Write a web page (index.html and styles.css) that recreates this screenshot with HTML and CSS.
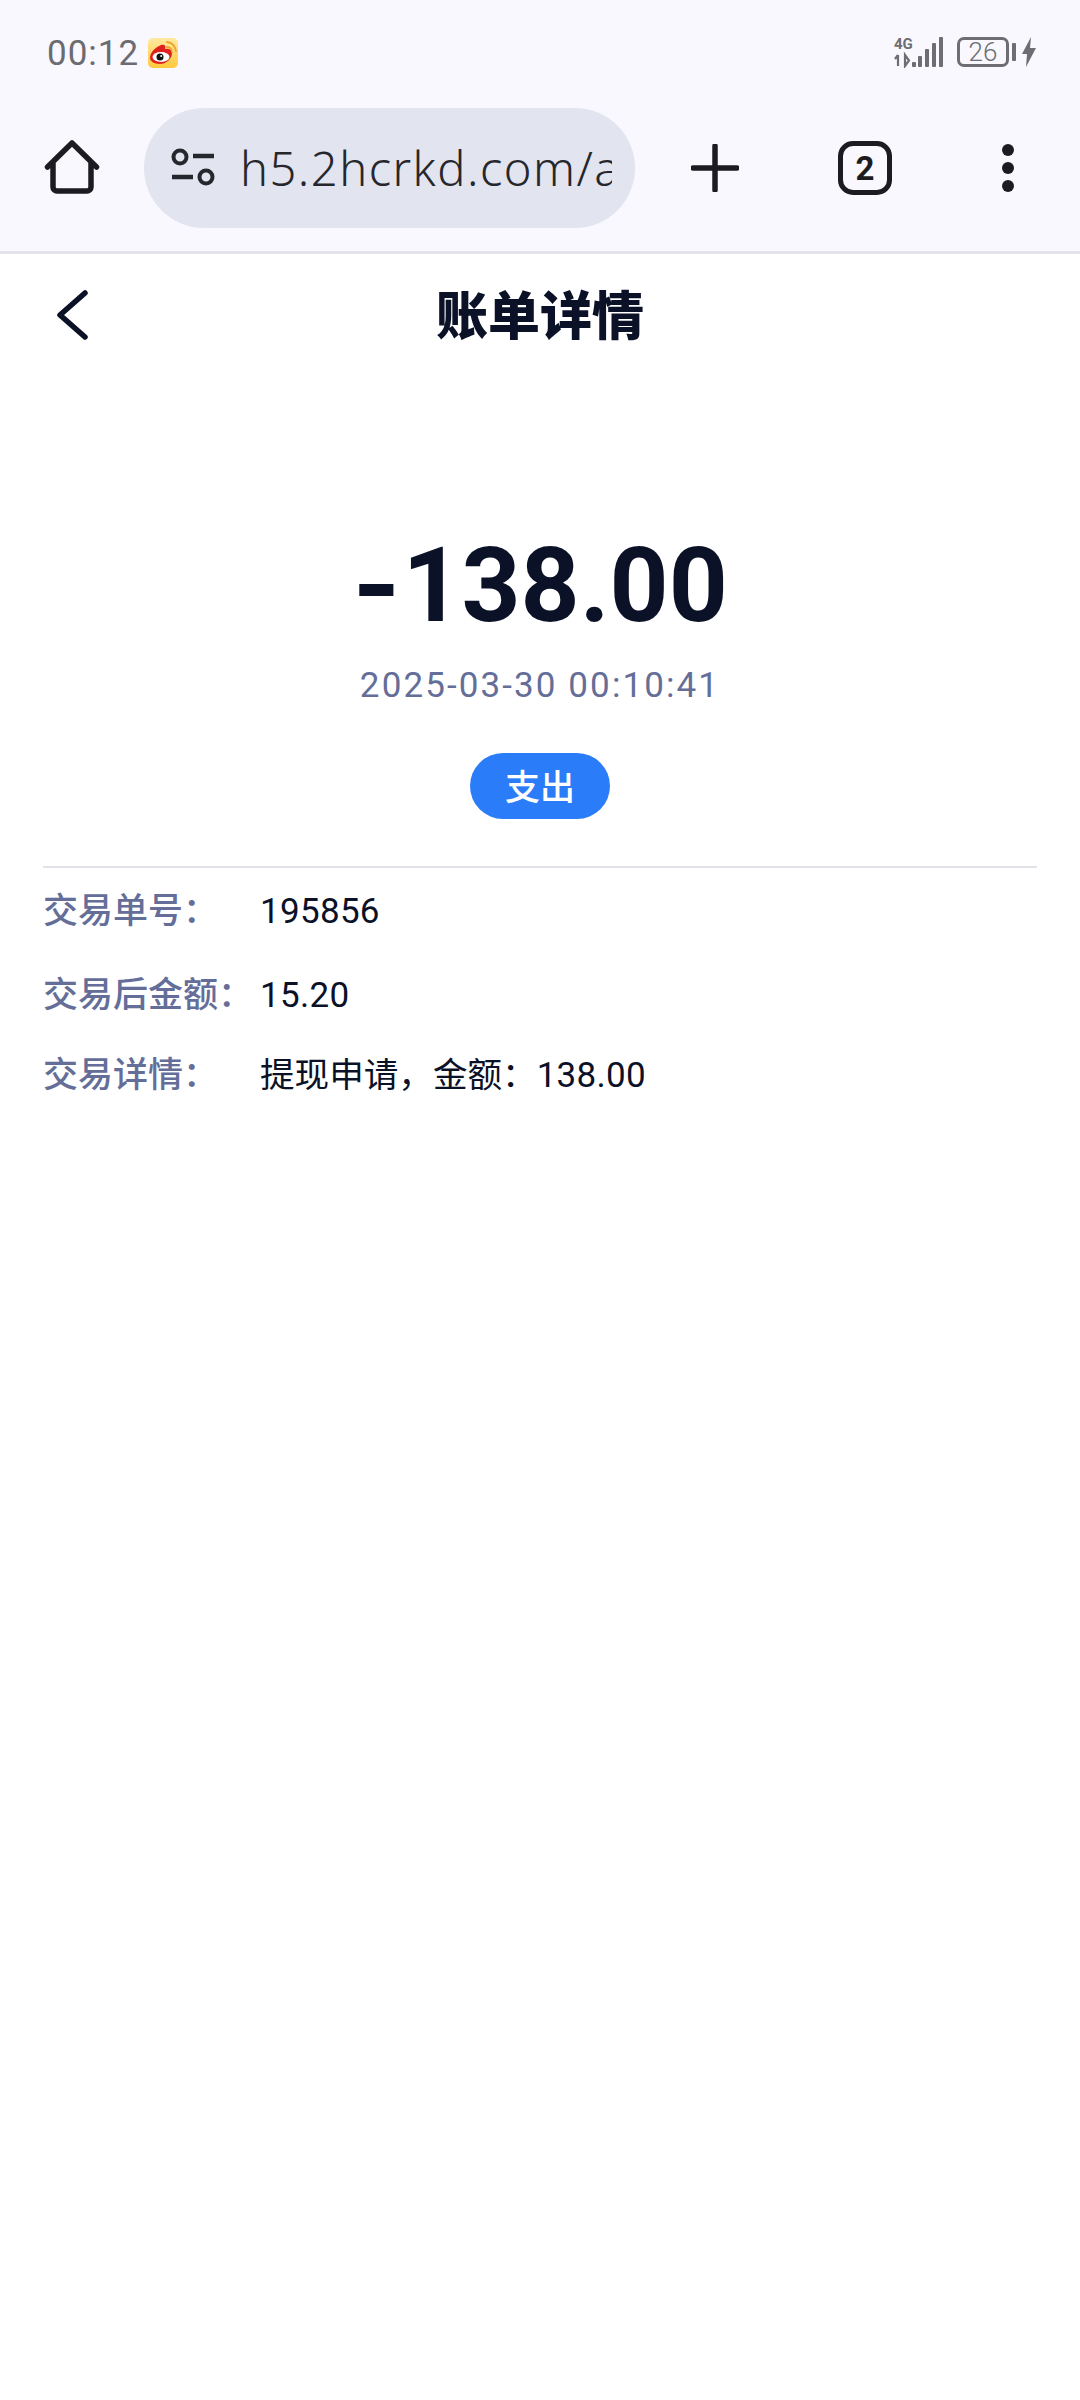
FILE: index.html
```html
<!DOCTYPE html>
<html lang="zh-CN">
<head>
    <meta charset="UTF-8">
    <meta name="viewport" content="width=device-width, initial-scale=1.0">
    <title>账单详情</title>
    <link rel="stylesheet" href="styles.css">
</head>
<body>
  <div class="browser-top">
    <div class="status-bar">
        <div class="status-left">
            <span class="clock">00:12</span>
            <svg class="app-icon" viewBox="0 0 30 30" width="30" height="30">
                <defs>
                    <linearGradient id="appbg" x1="0" y1="0" x2="0" y2="1">
                        <stop offset="0" stop-color="#ffe9a0"/>
                        <stop offset="1" stop-color="#ffc93c"/>
                    </linearGradient>
                </defs>
                <rect width="30" height="30" rx="5" fill="url(#appbg)"/>
                <path d="M2 20c0-6 6-11 11-13 4-1 5 1 4 4 4-1 7 1 7 4 0 6-6 11-12 11-6 0-10-3-10-6z" fill="#e0201c"/>
                <ellipse cx="13" cy="19" rx="8.500" ry="5" fill="#fff"/>
                <circle cx="12" cy="19" r="3.500" fill="#111"/>
                <circle cx="13.200" cy="18" r="1" fill="#fff"/>
                <path d="M19 9a5 5 0 0 1 5 5M19 4a10 10 0 0 1 9 9" fill="none" stroke="#eda02c" stroke-width="1.800" stroke-linecap="round"/>
            </svg>
        </div>
        <div class="status-right">
            <svg class="signal" viewBox="0 0 50 32" width="50" height="32">
                <text x="0" y="13" class="net-text">4G</text>
                <path d="M4 19v11M1 23l3-4M11 19v11l4-5.500z" fill="none" stroke="#6d6d72" stroke-width="2.200"/>
                <rect x="18" y="26" width="4" height="5" rx="1" fill="#6d6d72"/>
                <rect x="24" y="20" width="4" height="11" rx="1" fill="#6d6d72"/>
                <rect x="31" y="13" width="4" height="18" rx="1" fill="#6d6d72"/>
                <rect x="38" y="7" width="4" height="24" rx="1" fill="#6d6d72"/>
                <rect x="45" y="1" width="4" height="30" rx="1" fill="#6d6d72"/>
            </svg>
            <div class="battery"><span>26</span></div>
            <div class="battery-cap"></div>
            <svg viewBox="0 0 14 30" width="14" height="30">
                <path d="M9 0 0 17h5l-1 13 10-19H8z" fill="#6d6d72"/>
            </svg>
        </div>
    </div>
    <div class="toolbar">
        <svg class="home-icon" viewBox="0 0 56 56" width="56" height="56">
            <path d="M3.500 27 28 3l24.500 24M9 22v25a4 4 0 0 0 4 4h30a4 4 0 0 0 4-4V22" fill="none" stroke="#1b1b20" stroke-width="5.500" stroke-linecap="round" stroke-linejoin="round"/>
        </svg>
        <div class="url-pill">
            <svg class="tune-icon" viewBox="0 0 44 40" width="44" height="40">
                <circle cx="9" cy="9" r="6.500" fill="none" stroke="#26272c" stroke-width="4"/>
                <path d="M22 8h21M1 29h21" stroke="#26272c" stroke-width="4.500" fill="none"/>
                <circle cx="35" cy="29" r="6.500" fill="none" stroke="#26272c" stroke-width="4"/>
            </svg>
            <div class="url-text">h5.2hcrkd.com/a</div>
        </div>
        <svg class="plus-icon" viewBox="0 0 48 48" width="48" height="48">
            <path d="M24 2v44M2 24h44" stroke="#1b1b20" stroke-width="5.500" stroke-linecap="round"/>
        </svg>
        <div class="tab-count">2</div>
        <div class="more-dots"><i></i><i></i><i></i></div>
    </div>
  </div>

  <div class="page">
    <div class="nav-bar">
        <svg class="back-icon" viewBox="0 0 33 50" width="33" height="50">
            <path d="M29 3 4 25l25 22" fill="none" stroke="#0b1126" stroke-width="5.500" stroke-linecap="round" stroke-linejoin="round"/>
        </svg>
        <h1>账单详情</h1>
    </div>
    <div class="summary">
        <div class="amount"><span class="minus">-</span>138.00</div>
        <div class="time">2025-03-30 00:10:41</div>
        <div class="tag">支出</div>
    </div>
    <div class="details">
        <div class="row row-no"><span class="label">交易单号：</span><span class="value num">195856</span></div>
        <div class="row row-balance"><span class="label">交易后金额：</span><span class="value num">15.20</span></div>
        <div class="row"><span class="label">交易详情：</span><span class="value">提现申请，金额：<span class="num">138.00</span></span></div>
    </div>
  </div>
</body>
</html>
```

FILE: styles.css
```css
*{
    margin: 0;
    padding: 0;
    box-sizing: border-box;
}
body{
    background: white;
    width: 1080px;
    min-height: 2400px;
    font-family: "Inter", "Roboto", "Noto Sans CJK SC", sans-serif;
}
.browser-top{
    background: #f8f8fe;
    height: 254px;
    border-bottom: 3px solid #e2e3e9;
}
.status-bar{
    height: 108px;
    padding: 28px 44px 0 47px;
    display: flex;
    justify-content: space-between;
    align-items: flex-start;
}
.status-left{
    display: flex;
    align-items: center;
    gap: 9px;
    height: 50px;
}
.clock{
    font-family: "Roboto", sans-serif;
    font-size: 35px;
    color: #6b6b70;
    letter-spacing: 1px;
}
.status-right{
    display: flex;
    align-items: center;
    height: 50px;
    margin-top: -1px;
}
.net-text{
    font-family: "Roboto", sans-serif;
    font-size: 15px;
    font-weight: 700;
    fill: #6d6d72;
}
.battery{
    width: 52px;
    height: 30px;
    margin-left: 13px;
    border: 3px solid #6d6d72;
    border-radius: 7px;
    display: flex;
    align-items: center;
    justify-content: center;
    font-family: "Roboto", sans-serif;
    font-size: 26px;
    font-weight: 300;
    color: #6d6d72;
}
.battery-cap{
    width: 4px;
    height: 18px;
    margin: 0 6px 0 3px;
    background: #6d6d72;
    border-radius: 1px;
}
.toolbar{
    display: flex;
    align-items: center;
    height: 120px;
}
.home-icon{
    margin-left: 44px;
}
.url-pill{
    width: 491px;
    height: 120px;
    margin-left: 44px;
    padding: 0 23px 0 27px;
    border-radius: 60px;
    background: #e2e4f0;
    display: flex;
    align-items: center;
}
.tune-icon{
    flex: none;
}
.url-text{
    margin-left: 25px;
    width: 372px;
    overflow: hidden;
    white-space: nowrap;
    font-family: "Noto Sans", sans-serif;
    font-size: 47px;
    font-weight: 300;
    letter-spacing: 1.500px;
    color: #26272c;
}
.plus-icon{
    margin-left: 56px;
}
.tab-count{
    width: 54px;
    height: 54px;
    margin-left: 99px;
    border: 5px solid #1b1b20;
    border-radius: 15px;
    display: flex;
    align-items: center;
    justify-content: center;
    font-family: "Roboto", sans-serif;
    font-size: 33px;
    font-weight: 700;
    color: #1b1b20;
}
.more-dots{
    margin-left: 110px;
    display: flex;
    flex-direction: column;
    gap: 6px;
}
.more-dots i{
    display: block;
    width: 12px;
    height: 12px;
    border-radius: 50%;
    background: #1b1b20;
}
.page{
    padding: 0 43px;
}
.nav-bar{
    position: relative;
    height: 84px;
    margin-top: 16px;
    display: flex;
    align-items: center;
    justify-content: center;
}
.back-icon{
    position: absolute;
    left: 13px;
    top: 20px;
}
.nav-bar h1{
    font-family: "Noto Sans CJK SC", sans-serif;
    font-size: 52px;
    font-weight: 900;
    color: #0b1126;
}
.summary{
    display: flex;
    flex-direction: column;
    align-items: center;
    border-bottom: 2px solid #e2e3e9;
    height: 514px;
    padding-top: 171px;
}
.amount{
    font-family: "Roboto", sans-serif;
    font-size: 103px;
    line-height: 122px;
    font-weight: 700;
    color: #0b1126;
}
.minus{
    font-family: "Inter", sans-serif;
    line-height: 1;
    margin-right: 2px;
}
.time{
    margin-top: 18px;
    font-family: "Roboto", sans-serif;
    font-size: 35px;
    line-height: 42px;
    color: #646e98;
    letter-spacing: 2.100px;
}
.tag{
    margin-top: 46px;
    width: 140px;
    height: 66px;
    border-radius: 33px;
    background: #2a7cf8;
    color: white;
    font-family: "Noto Sans CJK SC", sans-serif;
    font-size: 35px;
    font-weight: 500;
    line-height: 64px;
    text-align: center;
}
.details{
    font-family: "Noto Sans CJK SC", sans-serif;
    font-size: 35px;
    line-height: 50px;
}
.row{
    display: flex;
    align-items: baseline;
}
.row-no{
    margin-top: 15px;
}
.row-balance{
    margin-top: 30px;
    margin-bottom: 26px;
}
.label{
    width: 217px;
    color: #646e98;
    font-weight: 500;
}
.value{
    font-family: "Roboto", "Noto Sans CJK SC", sans-serif;
    font-size: 34.600px;
    color: #0b1126;
}
.num{
    font-size: 35px;
    letter-spacing: 0.300px;
}
```
